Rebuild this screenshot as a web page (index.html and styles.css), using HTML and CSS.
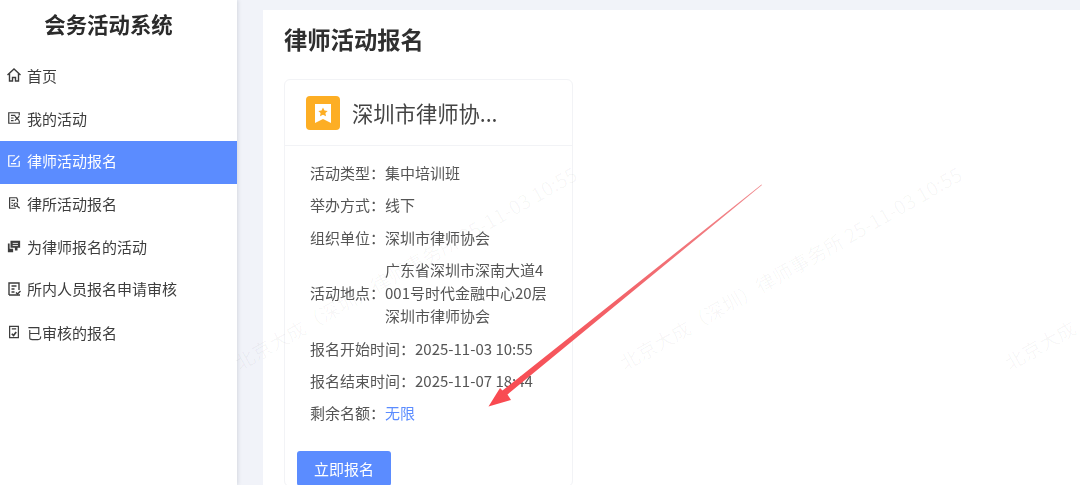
FILE: index.html
```html
<!DOCTYPE html>
<html lang="zh-CN">
<head>
    <meta charset="UTF-8">
    <title>律师活动报名</title>
    <link rel="stylesheet" href="styles.css">
</head>
<body>
    <div class="layout">
        <aside class="sidebar">
            <h1 class="logo">会务活动系统</h1>
            <nav class="menu">
                <a class="menu-item">
                    <svg class="menu-icon" viewBox="0 0 16 16"><path d="M1.500 8 8 2l6.500 6M3.500 6.500V14h3v-3.500h3V14h3V6.500"/></svg>
                    <span>首页</span>
                </a>
                <a class="menu-item">
                    <svg class="menu-icon small" viewBox="0 0 16 16"><path d="M14 5V2H2v12h12v-3M4.500 5h5M4.500 8h3M4.500 11h3"/><path d="m9 6 5 5m0-5-5 5"/></svg>
                    <span>我的活动</span>
                </a>
                <a class="menu-item active">
                    <svg class="menu-icon small" viewBox="0 0 16 16"><path d="M14 8v6H2V2h7M4.500 11h6"/><path d="M7 8.500 14 2"/></svg>
                    <span>律师活动报名</span>
                </a>
                <a class="menu-item">
                    <svg class="menu-icon small" viewBox="0 0 16 16"><path d="M10 14H3V2h8l1 2v3M5 5h4M5 8h2M5 11h2"/><circle cx="10" cy="10" r="2"/><path d="m11.500 11.500 3 2.500"/></svg>
                    <span>律所活动报名</span>
                </a>
                <a class="menu-item">
                    <svg class="menu-icon small" viewBox="0 0 16 16"><path class="solid" d="M4 2h11v8h-3v3H9v-3H4z"/><path class="solid" d="M1 5h2v6h4v4H1z"/><path class="cut" d="M6.500 5h6M6.500 7.500h6"/></svg>
                    <span>为律师报名的活动</span>
                </a>
                <a class="menu-item">
                    <svg class="menu-icon" viewBox="0 0 16 16"><path d="M3 14V2h10v7M3 14h11M5.500 5h5M5.500 8h3M5.500 11h3"/><path d="m10 11.500 1.500 1.500 3-3"/></svg>
                    <span>所内人员报名申请审核</span>
                </a>
                <a class="menu-item">
                    <svg class="menu-icon small" viewBox="0 0 16 16"><path d="M3 1.500h10v13H3zM5.500 4.500h5"/><path class="thick" d="m5.500 10 2 2 3-4"/></svg>
                    <span>已审核的报名</span>
                </a>
            </nav>
        </aside>

        <main class="main">
            <div class="panel">
                <h2 class="page-title">律师活动报名</h2>

                <div class="activity-card">
                    <div class="card-header">
                        <div class="card-icon">
                            <svg viewBox="0 0 34 34"><path class="ribbon" d="M9 8h16v19l-8-4-8 4z"/><path class="star" d="m17 11.500 1.500 3 3.200.400-2.300 2.200.600 3.200-3-1.500-3 1.500.600-3.200-2.300-2.200 3.200-.400z"/></svg>
                        </div>
                        <div class="card-title">深圳市律师协...</div>
                    </div>
                    <div class="card-body">
                        <div class="info-row"><span class="info-label">活动类型：</span><span>集中培训班</span></div>
                        <div class="info-row"><span class="info-label">举办方式：</span><span>线下</span></div>
                        <div class="info-row"><span class="info-label">组织单位：</span><span>深圳市律师协会</span></div>
                        <div class="info-row"><span class="info-label">活动地点：</span><span class="info-wrap">广东省深圳市深南大道4001号时代金融中心20层深圳市律师协会</span></div>
                        <div class="info-row"><span class="info-label">报名开始时间：</span><span>2025-11-03 10:55</span></div>
                        <div class="info-row"><span class="info-label">报名结束时间：</span><span>2025-11-07 18:44</span></div>
                        <div class="info-row"><span class="info-label">剩余名额：</span><span class="info-link">无限</span></div>
                        <button class="signup-btn">立即报名</button>
                    </div>
                </div>
            </div>
        </main>
    </div>

    <!-- watermark and annotation sit over the page -->
    <div class="watermark mark-1">北京大成（深圳）律师事务所 25-11-03 10:55</div>
    <div class="watermark mark-2">北京大成（深圳）律师事务所 25-11-03 10:55</div>
    <div class="watermark mark-3">北京大成</div>

    <svg class="arrow" viewBox="0 0 1080 485">
        <defs>
            <linearGradient id="shaft" x1="762" y1="185" x2="488" y2="407" gradientUnits="userSpaceOnUse">
                <stop offset="0" stop-color="#f08a8e"/>
                <stop offset="0.5" stop-color="#f2646a"/>
                <stop offset="1" stop-color="#f9484f"/>
            </linearGradient>
        </defs>
        <path fill="url(#shaft)" d="M762 185 507.500 394.500 511 400 488.500 406.500 500 388 502.500 390.500 761.500 184.500z"/>
    </svg>
</body>
</html>
```

FILE: styles.css
```css
* {
    margin: 0;
    padding: 0;
    box-sizing: border-box;
}

html, body {
    height: 485px;
    overflow: hidden;
}

body {
    position: relative;
    background: #f1f3f9;
    color: #333;
    font-family: "Noto Sans CJK SC", "Noto Sans", sans-serif;
    font-size: 15px;
}

.layout {
    display: flex;
    height: 100%;
    filter: blur(0.4px);
}

.sidebar {
    width: 237px;
    flex-shrink: 0;
    background: #fff;
    box-shadow: 1px 0 4px rgba(0, 21, 41, 0.12);
}

.logo {
    height: 56px;
    line-height: 47px;
    padding-right: 20px;
    text-align: center;
    font-size: 21.4px;
    font-weight: 700;
    color: #2b2b2b;
}

.menu-item {
    display: flex;
    align-items: center;
    gap: 5px;
    height: 42.7px;
    padding: 0 0 4px 6px;
    color: #3d3d3d;
}

.menu-item:last-child {
    margin-top: 1px;
}

.menu-item.active {
    background: #5b8cff;
    color: #fff;
}

.menu-icon {
    width: 16px;
    height: 16px;
    fill: none;
    stroke: currentColor;
    stroke-width: 1.4;
}

.menu-icon.small {
    width: 14px;
    height: 14px;
    margin: 0 1px;
}

.menu-icon .solid {
    fill: currentColor;
    stroke: none;
}

.menu-icon .cut {
    stroke: #fff;
    stroke-width: 1;
}

.menu-icon .thick {
    stroke-width: 2;
}

.main {
    flex: 1;
    padding: 10px 0 0 26px;
}

.panel {
    height: 100%;
    background: #fff;
    padding: 0 0 0 21px;
}

.page-title {
    height: 69px;
    line-height: 58px;
    font-size: 23.3px;
    font-weight: 700;
    color: #2f2f2f;
}

.activity-card {
    width: 289px;
    border: 1px solid #f2f3f6;
    border-radius: 6px;
}

.card-header {
    display: flex;
    align-items: center;
    gap: 12px;
    height: 66px;
    padding-left: 21px;
    border-bottom: 1px solid #f2f3f6;
}

.card-icon {
    width: 34px;
    height: 34px;
    border-radius: 4px;
    background: #fdae24;
}

.card-icon svg {
    display: block;
}

.card-icon .ribbon {
    fill: #fff;
}

.card-icon .star {
    fill: #fdae24;
}

.card-title {
    font-size: 21.3px;
    line-height: 28px;
    color: #444;
}

.card-body {
    padding: 15px 12px 0 12px;
}

.info-row {
    display: flex;
    align-items: center;
    margin: 0 0 9.4px 13px;
    line-height: 23px;
    color: #555;
}

.info-label {
    flex-shrink: 0;
}

.info-wrap {
    width: 164px;
    word-break: break-all;
}

.info-link {
    color: #5b8cff;
}

.signup-btn {
    display: block;
    width: 94px;
    height: 35px;
    margin-top: 27px;
    border: none;
    border-radius: 3px;
    background: #5b8cff;
    color: #fff;
    font-family: inherit;
    font-size: 15px;
}

.watermark {
    position: absolute;
    font-size: 19.500px;
    line-height: 24px;
    white-space: nowrap;
    color: rgba(0, 0, 0, 0.035);
    transform: rotate(-29.500deg);
    transform-origin: left center;
    pointer-events: none;
}

.mark-1 {
    left: 236px;
    top: 352px;
}

.mark-2 {
    left: 621px;
    top: 352px;
}

.mark-3 {
    left: 1006px;
    top: 352px;
}

.arrow {
    position: absolute;
    left: 0;
    top: 0;
    width: 1080px;
    height: 485px;
    pointer-events: none;
}
```
